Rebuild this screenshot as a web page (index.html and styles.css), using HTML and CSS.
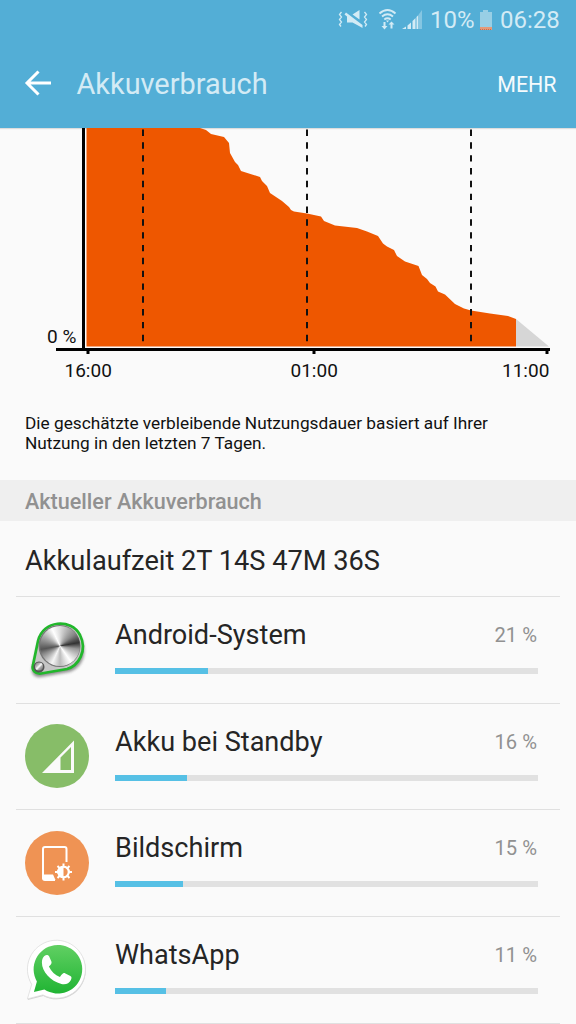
FILE: index.html
```html
<!DOCTYPE html>
<html lang="de">
<head>
<meta charset="utf-8">
<title>Akkuverbrauch</title>
<link rel="stylesheet" href="styles.css">
</head>
<body>
<header class="top">
  <div class="status">
    <svg class="status-icons" width="88" height="24" viewBox="337 8 88 24" fill="#d3ebf5">
      <path d="M352.500 14.500L359.500 10v9.500zM344.500 14.500l1.500-2L362.500 25v3L359 26l-6.500-3.500H347v-6z"/>
      <path d="M341.500 12l-2 2.500 2 2.500-2 2.500 2 2.500-2 2.500 1.500 2M364.500 12l2 2.500-2 2.500 2 2.500-2 2.500 2 2.500-1.500 2" fill="none" stroke="#d3ebf5" stroke-width="1.300"/>
      <g fill="none" stroke="#d3ebf5" stroke-width="1.900"><path d="M379.500 13.500q8-7 16 0M382 16.500q5.500-4.500 11 0M384.300 19.500q3.200-2.500 6.400 0"/></g>
      <path d="M386 20.500h3l-1.500 2zM383.500 22h2v4h2l-3 3.500-3-3.500h2zM390.500 28.500v-4h-2l3-3 3 3h-2v4z"/>
      <path d="M402 29l4-2.500v2.500zM407.500 25.500l3.500-3v6.500h-3.500zM412.500 21l3-3v11h-3z"/><path d="M416.500 17l1.500-1.500v13.500h-1.500z"/><path d="M418 15.500l4-5.500v19h-4z" opacity=".4"/>
    </svg>
    <span class="percent">10%</span>
    <svg class="battery" width="14" height="21" viewBox="0 0 14 21"><path d="M4 0h5v2h4v16H1V2h3z" fill="#98cfe5"/><path d="M1 17h12v3H1z" fill="#e59a78"/><path d="M1 19.500h12" stroke="#c66d50" stroke-dasharray="1 1"/></svg>
    <span class="clock">06:28</span>
  </div>
  <div class="bar">
    <svg class="back" width="28" height="28" viewBox="0 0 28 28"><path d="M14.500 2.500L3 14l11.500 11.500M3 14h24" fill="none" stroke="#fff" stroke-width="3"/></svg>
    <h1 class="title">Akkuverbrauch</h1>
    <span class="more">MEHR</span>
  </div>
</header>
<main>
  <svg class="chart" width="576" height="262" viewBox="0 128 576 262">
    <path d="M516 319L549 346.500H516z" fill="#d6d6d6"/>
    <path d="M86.500 346.500V128H200L206 130 211 134 224 137 229 143 230 153 235 162 238 165 241 171 260 177 262 181 267 186 270 193 282 201 289 207 291 210 294 211.500 307 213.500 321 216.500 324 221 335 225.500 357 228 367 231.500 378 236 383 243.500 387 246.500 394 250 397 256 405 261.500 418.500 266 422 275 427 279 430 283 435.500 286.500 438 291.500 445 294.500 455 304 464 308.500 471 310.500 490 313.500 508 316 516 319V346.500z" fill="#ee5700"/>
    <g stroke="#111" stroke-width="2" stroke-dasharray="6.400 6.430"><path d="M143 129.500V342M307 129.500V342M471 129.500V342"/></g>
    <path d="M82 128h3v220H82zM56 348h494v3H56zM86.500 351h3v3h-3zM312.500 351h3v3h-3zM545.500 351h3v3h-3z" fill="#000"/>
    <g class="axis">
      <text x="47" y="343">0 %</text>
      <text x="64.500" y="377">16:00</text>
      <text x="290.500" y="377">01:00</text>
      <text x="502" y="377">11:00</text>
    </g>
  </svg>
  <p class="note">Die geschätzte verbleibende Nutzungsdauer basiert auf Ihrer<br>Nutzung in den letzten 7 Tagen.</p>
  <h2 class="section">Aktueller Akkuverbrauch</h2>
  <div class="runtime">Akkulaufzeit 2T 14S 47M 36S</div>
  <ul class="list">
    <li class="row">
      <svg class="icon" viewBox="0 0 64 64">
        <defs>
          <linearGradient id="steel" x1="0" y1="0" x2="1" y2="1"><stop offset="0" stop-color="#777"/><stop offset=".35" stop-color="#bbb"/><stop offset=".5" stop-color="#fff"/><stop offset=".65" stop-color="#aaa"/><stop offset="1" stop-color="#666"/></linearGradient>
          <filter id="soft" x="-20%" y="-20%" width="140%" height="140%"><feGaussianBlur stdDeviation="1.600"/></filter>
        </defs>
        <path d="M13 24C18 2 49 1 57 20C64 38 53 50 44 52L16 57C9 58 6 53 7 48z" fill="#555" opacity=".65" filter="url(#soft)" transform="translate(0 2)"/>
        <path d="M13 23C18 2 46 0 55 17C63 33 53 48 42 51L16 55.500C10 56 6.500 52 8 47z" fill="#c6c6c6" stroke="#21b72b" stroke-width="2.700"/>
        <circle cx="34.500" cy="28" r="21" fill="#777"/>
        <foreignObject x="15" y="8" width="40" height="40"><div class="dial"></div></foreignObject>
        <circle cx="14" cy="49" r="5.500" fill="#555"/><circle cx="14" cy="48.500" r="4" fill="url(#steel)"/>
      </svg>
      <div class="body"><div class="line"><span class="name">Android-System</span><span class="value">21 %</span></div><div class="track"><div class="fill" style="width:93px"></div></div></div>
    </li>
    <li class="row">
      <svg class="icon" viewBox="0 0 64 64"><circle cx="32" cy="32" r="32" fill="#87bd68"/><path fill-rule="evenodd" d="M17 49L49 16.500V49zM35.500 46H46V23L35.500 33.500z" fill="#fafafa"/></svg>
      <div class="body"><div class="line"><span class="name">Akku bei Standby</span><span class="value">16 %</span></div><div class="track"><div class="fill" style="width:72px"></div></div></div>
    </li>
    <li class="row">
      <svg class="icon" viewBox="0 0 64 64"><circle cx="32" cy="32" r="32" fill="#ef9354"/>
        <path d="M41.500 31V18q0-2-2-2H20q-2 0-2 2V47q0 2 2 2H30" fill="none" stroke="#fff" stroke-width="2"/><path d="M17 43.500h11l2.500 5.500H20q-3 0-3-3z" fill="#fff"/>
        <circle cx="38.500" cy="41" r="5.200" fill="none" stroke="#fff" stroke-width="2"/><path d="M38.500 36v10a5 5 0 0 0 0-10z" fill="#ef9354"/><path d="M38.500 35a6 6 0 0 0 0 12z" fill="#fff"/><circle cx="38.500" cy="41" r="5.200" fill="none" stroke="#fff" stroke-width="2"/>
        <path d="M38.500 32.500v3M38.500 46.500v3M30 41h3M44 41h3M32.500 35l2 2M42.500 45l2 2M44.500 35l-2 2M34.500 45l-2 2" stroke="#fff" stroke-width="2"/></svg>
      <div class="body"><div class="line"><span class="name">Bildschirm</span><span class="value">15 %</span></div><div class="track"><div class="fill" style="width:67.500px"></div></div></div>
    </li>
    <li class="row">
      <svg class="icon" viewBox="0 0 64 64">
        <defs><linearGradient id="leaf" x1="0" y1="0" x2="0" y2="1"><stop offset="0" stop-color="#61d063"/><stop offset="1" stop-color="#20b433"/></linearGradient></defs>
        <g transform="translate(-.6 .4)">
        <path d="M3 60.500L7.300 46A29 29 0 1 1 18.500 56.500z" fill="#bbb" opacity=".65" transform="translate(.4 1)"/>
        <path d="M3 60.500L7.300 46A29 29 0 1 1 18.500 56.500z" fill="#fff" stroke="#ddd" stroke-width=".8"/>
        <path d="M9.500 53.500L12.500 43A24.300 24.300 0 1 1 20 51z" fill="url(#leaf)"/>
        <path d="M20 17.500c2-1.500 4-1 4.800.5l2.200 5c.5 1.500 0 2.500-2.500 5 2.500 5 6 8.500 11 10.500 3-4 3.500-4.500 5.500-3.500l5 2.500c1.500.8 1.300 2 .5 4-1.500 3.500-5.500 5-9.500 4C26 42.500 17.500 33 17.500 24c0-3 .8-5 2.500-6.500z" fill="#fff"/></g></svg>
      <div class="body"><div class="line"><span class="name">WhatsApp</span><span class="value">11 %</span></div><div class="track"><div class="fill" style="width:51px"></div></div></div>
    </li>
  </ul>
</main>
</body>
</html>
```
FILE: styles.css
```css
* { box-sizing: border-box; }
body { margin: 0; width: 576px; height: 1024px; overflow: hidden; background: #fafafa; font-family: Roboto, sans-serif; color: #252525; }
.top { height: 128px; background: #53aed6; box-shadow: 0 1px 1px #ddd; color: #d3ebf5; }
.status { height: 40px; display: flex; align-items: center; padding-left: 337px; font-size: 24px; line-height: 40px; }
.status-icons { flex: none; }
.percent { margin-left: 5px; width: 48px; }
.battery { margin-left: 1px; flex: none; }
.clock { margin-left: 7px; }
.bar { height: 88px; display: flex; align-items: center; padding: 0 19.500px 0 24px; }
.back { flex: none; margin-top: -2px; }
.title { margin: 0 0 0 24.500px; font-size: 28.900px; font-weight: 400; line-height: 88px; }
.more { margin-left: auto; font-size: 21.400px; color: #f5fbfd; }
.chart { display: block; }
.axis { font-size: 19px; fill: #111; }
.note { margin: 0; padding: 23px 25px 0; height: 90px; font-size: 17.250px; line-height: 20px; color: #111; white-space: nowrap; }
.section { margin: 0; height: 41px; padding-left: 25px; background: #efefef; color: #919191; font-size: 21.600px; line-height: 43px; font-weight: 500; }
.runtime { height: 75px; padding-left: 25px; font-size: 27.200px; line-height: 80px; }
.list { margin: 0; padding: 0 16px; list-style: none; }
.row { height: 106.700px; border-top: 1px solid #e0e0e0; display: flex; padding: 0 22px 0 9px; }
.row:last-child { border-bottom: 1px solid #e0e0e0; height: 107.900px; }
.icon { width: 64px; height: 64px; margin-top: 20.500px; flex: none; }
.body { flex: 1; margin-left: 26px; padding-top: 20px; }
.line { display: flex; justify-content: space-between; line-height: 36px; height: 51px; }
.name { font-size: 27.100px; }
.value { font-size: 20.200px; color: #919191; margin-right: 1px; }
.track { height: 6px; background: #e1e1e1; }
.fill { height: 6px; background: #56c0e5; }
.dial { width: 40px; height: 40px; border-radius: 50%; background: conic-gradient(#ddd, #888 50deg, #333 80deg, #999 100deg, #fff 145deg, #bbb 180deg, #f5f5f5 205deg, #888 245deg, #555 260deg, #aaa 300deg, #fff 335deg, #ddd); }
```
